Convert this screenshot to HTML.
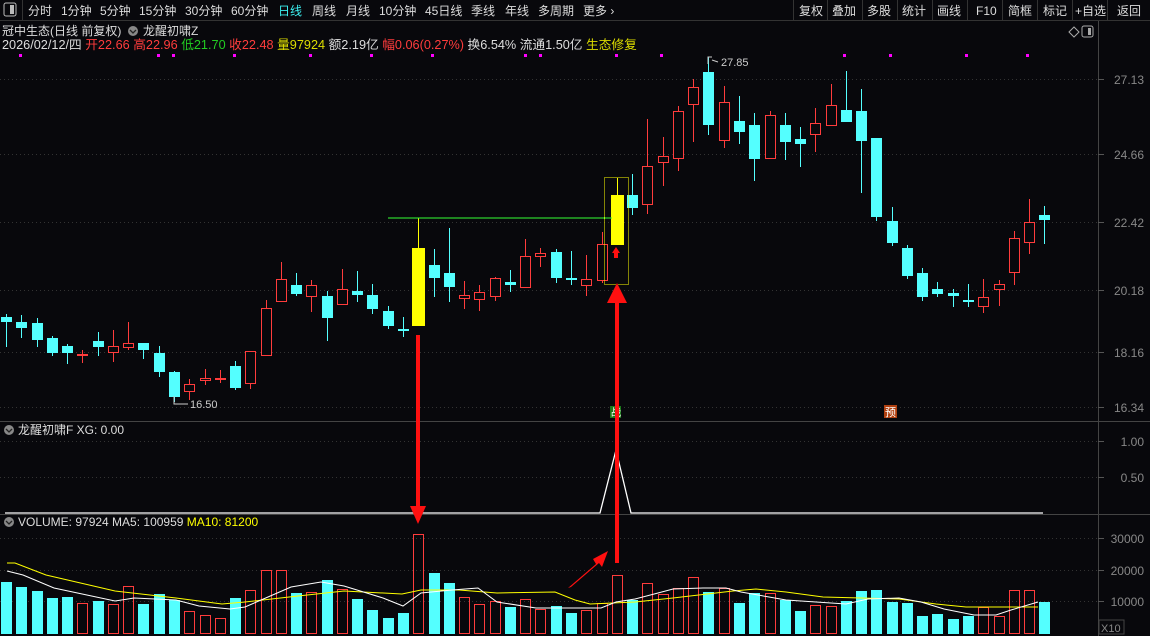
<!DOCTYPE html>
<html><head><meta charset="utf-8">
<style>
body{margin:0;background:#08080c;width:1150px;height:636px;overflow:hidden;font-family:"Liberation Sans","Noto Sans CJK SC",sans-serif}
svg{display:block}
text{font-family:"Liberation Sans","Noto Sans CJK SC",sans-serif}
</style></head><body>
<svg id="s" width="1150" height="636" xmlns="http://www.w3.org/2000/svg">
<rect width="1150" height="636" fill="#08080c"/>
<line x1="0" y1="20.5" x2="1150" y2="20.5" stroke="#333"/>
<rect x="4" y="3" width="12" height="13" rx="2" fill="none" stroke="#bbb"/>
<rect x="10" y="5" width="4" height="9" fill="#bbb"/>
<line x1="22.5" y1="0" x2="22.5" y2="20" stroke="#333"/>
<g font-size="12" fill="#ddd">
<text x="28" y="15">分时</text><text x="61" y="15">1分钟</text><text x="100" y="15">5分钟</text><text x="139" y="15">15分钟</text><text x="185" y="15">30分钟</text><text x="231" y="15">60分钟</text><text x="278" y="15" fill="#3cf0f0">日线</text><text x="312" y="15">周线</text><text x="346" y="15">月线</text><text x="379" y="15">10分钟</text><text x="425" y="15">45日线</text><text x="471" y="15">季线</text><text x="505" y="15">年线</text><text x="538" y="15">多周期</text><text x="583" y="15">更多 ›</text>
<text x="799" y="15">复权</text><text x="832" y="15">叠加</text><text x="867" y="15">多股</text><text x="902" y="15">统计</text><text x="937" y="15">画线</text><text x="976" y="15">F10</text><text x="1008" y="15">简框</text><text x="1043" y="15">标记</text><text x="1075" y="15">+自选</text><text x="1117" y="15">返回</text>
</g>
<g stroke="#333"><line x1="793.5" y1="0" x2="793.5" y2="20"/><line x1="827.5" y1="0" x2="827.5" y2="20"/><line x1="862.5" y1="0" x2="862.5" y2="20"/><line x1="897.5" y1="0" x2="897.5" y2="20"/><line x1="932.5" y1="0" x2="932.5" y2="20"/><line x1="967.5" y1="0" x2="967.5" y2="20"/><line x1="1002.5" y1="0" x2="1002.5" y2="20"/><line x1="1037.5" y1="0" x2="1037.5" y2="20"/><line x1="1072.5" y1="0" x2="1072.5" y2="20"/><line x1="1107.5" y1="0" x2="1107.5" y2="20"/></g>
<g font-size="12">
<text x="2" y="35" fill="#ddd">冠中生态(日线 前复权)</text>
<circle cx="133" cy="31" r="5" fill="#888"/><path d="M130 30l3 3 3-3" stroke="#222" fill="none" stroke-width="1.3"/>
<text x="143" y="35" fill="#ddd">龙醒初啸Z</text>
<text x="2" y="49" fill="#ddd" font-size="12.7">2026/02/12/四 <tspan fill="#ff3c3c">开22.66</tspan> <tspan fill="#ff3c3c">高22.96</tspan> <tspan fill="#22cc22">低21.70</tspan> <tspan fill="#ff3c3c">收22.48</tspan> <tspan fill="#dddd00">量97924</tspan> 额2.19亿 <tspan fill="#ff3c3c">幅0.06(0.27%)</tspan> 换6.54% 流通1.50亿 <tspan fill="#dddd00">生态修复</tspan></text>
</g>
<path d="M1069 32l5-5 5 5-5 5z" fill="none" stroke="#aaa"/>
<rect x="1082" y="26" width="11" height="11" rx="2" fill="none" stroke="#aaa"/><rect x="1088" y="28" width="3" height="7" fill="#aaa"/>
<line x1="1098.5" y1="21" x2="1098.5" y2="636" stroke="#444"/>
<line x1="0" y1="421.5" x2="1150" y2="421.5" stroke="#444"/>
<line x1="0" y1="514.5" x2="1150" y2="514.5" stroke="#444"/>
<g stroke="#333" stroke-dasharray="1,3">
<line x1="0" y1="79.5" x2="1098" y2="79.5"/><line x1="0" y1="154.5" x2="1098" y2="154.5"/><line x1="0" y1="222.5" x2="1098" y2="222.5"/><line x1="0" y1="290.5" x2="1098" y2="290.5"/><line x1="0" y1="352.5" x2="1098" y2="352.5"/><line x1="0" y1="407.5" x2="1098" y2="407.5"/>
<line x1="0" y1="441.5" x2="1098" y2="441.5"/><line x1="0" y1="477.5" x2="1098" y2="477.5"/>
<line x1="0" y1="538.5" x2="1098" y2="538.5"/><line x1="0" y1="570.5" x2="1098" y2="570.5"/><line x1="0" y1="601.5" x2="1098" y2="601.5"/>
</g>
<g stroke="#555"><line x1="1098" y1="79.5" x2="1104" y2="79.5"/><line x1="1098" y1="154.5" x2="1104" y2="154.5"/><line x1="1098" y1="222.5" x2="1104" y2="222.5"/><line x1="1098" y1="290.5" x2="1104" y2="290.5"/><line x1="1098" y1="352.5" x2="1104" y2="352.5"/><line x1="1098" y1="407.5" x2="1104" y2="407.5"/><line x1="1098" y1="441.5" x2="1104" y2="441.5"/><line x1="1098" y1="477.5" x2="1104" y2="477.5"/><line x1="1098" y1="538.5" x2="1104" y2="538.5"/><line x1="1098" y1="570.5" x2="1104" y2="570.5"/><line x1="1098" y1="601.5" x2="1104" y2="601.5"/></g>
<g font-size="12" fill="#888" text-anchor="end">
<text x="1144" y="84">27.13</text><text x="1144" y="159">24.66</text><text x="1144" y="227">22.42</text><text x="1144" y="295">20.18</text><text x="1144" y="357">18.16</text><text x="1144" y="412">16.34</text>
<text x="1144" y="446">1.00</text><text x="1144" y="482">0.50</text>
<text x="1144" y="543">30000</text><text x="1144" y="575">20000</text><text x="1144" y="606">10000</text>
</g>
<rect x="1099" y="620" width="25" height="14" fill="none" stroke="#444"/><text x="1101" y="632" font-size="11" fill="#888">X10</text>
<g font-size="12">
<circle cx="9" cy="430" r="5" fill="#888"/><path d="M6 429l3 3 3-3" stroke="#222" fill="none" stroke-width="1.3"/>
<text x="18" y="434" fill="#ddd">龙醒初啸F  XG: 0.00</text>
<circle cx="9" cy="522" r="5" fill="#888"/><path d="M6 521l3 3 3-3" stroke="#222" fill="none" stroke-width="1.3"/>
<text x="18" y="526" fill="#ddd">VOLUME: 97924  MA5: 100959  <tspan fill="#ffff00">MA10: 81200</tspan></text>
</g>
<g id="c"></g>
<line x1="388" y1="218" x2="612" y2="218" stroke="#33ff33"/>
<rect x="604.5" y="177.5" width="24" height="107" fill="none" stroke="#ffff00" stroke-dasharray="1,1"/>
<g font-size="11" fill="#ccc"><text x="190" y="408">16.50</text><path d="M174 396v8h14" stroke="#ccc" fill="none"/><text x="721" y="66">27.85</text><path d="M708 64v-7h4M712 60l6 2" stroke="#ccc" fill="none"/></g>
<rect x="610" y="406" width="11" height="12" fill="#1a7a1a"/><text x="611" y="416" font-size="10" fill="#fff">战</text>
<rect x="884" y="405" width="13" height="13" fill="#b04010"/><text x="885" y="416" font-size="11" fill="#fff">预</text>
<polyline points="5,513 600,513 616,450 631,513 1043,513" fill="none" stroke="#fff" stroke-width="1.3"/>
<g fill="#ff1010" stroke="none">
<rect x="416" y="335" width="4" height="175"/><path d="M410 506h16l-8 18z"/>
<rect x="615" y="300" width="4" height="263"/><path d="M607 303l10-20 10 20z"/>
<path d="M568 588l28-24-3-5 15-8-6 16-3-4-28 24z"/>
<path d="M612 253l4-6 4 6h-2v5h-4v-5z"/>
</g>
</svg>
<script>
var C=[
['c',317,322,314,347],['c',322,328,315,338],['c',323,340,318,347],['c',338,353,336,356],['c',346,353,344,364],['r',354,356,350,363],['c',341,347,332,356],['r',346,353,330,362],['r',343,348,322,350],['c',343,350,343,359],
['c',353,372,346,377],['c',372,397,371,402],['r',384,392,379,400],['r',378,381,369,385],['r',378,380,370,383],['c',366,388,361,390],['r',351,384,351,389],['r',308,356,300,356],['r',279,302,262,302],['c',285,294,273,296],
['r',285,297,280,312],['c',296,318,291,341],['r',289,305,269,305],['c',291,295,271,302],['c',295,309,284,314],['c',311,326,306,329],['c',329,331,317,337],['y',248,326,218,326],['c',265,278,249,297],['c',273,287,228,302],
['r',295,299,281,309],['r',292,300,285,311],['r',278,297,277,301],['c',282,285,270,292],['r',256,288,239,288],['r',253,257,248,267],['c',252,278,249,283],['c',278,280,251,285],['r',279,286,255,296],['r',244,281,232,283],
['y',195,245,178,245],['c',195,208,174,215],['r',166,205,119,214],['r',156,163,137,186],['r',111,159,106,171],['r',87,105,79,142],['c',72,125,57,135],['r',102,141,86,148],['c',121,132,96,144],['c',125,159,113,181],
['r',115,159,111,159],['c',125,142,113,160],['c',139,144,127,167],['r',123,135,108,152],['r',105,126,84,126],['c',110,122,71,122],['c',111,141,89,193],['c',138,217,138,221],['c',221,243,207,246],['c',248,276,245,279],
['c',273,297,268,301],['c',289,294,282,297],['c',293,296,289,307],['c',300,302,284,307],['r',297,307,279,313],['r',284,290,280,306],['r',238,273,231,285],['r',222,243,199,254],['c',215,220,206,244]];
var V=[['c',582],['c',587],['c',591],['c',598],['c',597],['r',603],['c',601],['r',604],['r',586],['c',604],['c',594],['c',600],['r',611],['r',615],['r',618],['c',598],['r',590],['r',570],['r',570],['c',593],['r',592],['c',580],['r',589],['c',599],['c',610],['c',618],['c',613],['r',534],['c',573],['c',583],['r',597],['r',604],['r',601],['c',607],['r',599],['r',609],['c',606],['c',613],['r',610],['r',603],['r',575],['c',600],['r',583],['r',594],['r',588],['r',577],['c',592],['r',588],['c',603],['c',593],['r',593],['c',600],['c',611],['r',605],['r',606],['c',601],['c',591],['c',590],['c',602],['c',603],['c',616],['c',614],['c',619],['c',616],['r',607],['r',616],['r',590],['r',590],['c',602]];
var s='',R='#ff3c3c',Cy='#54ffff';
for(var i=0;i<C.length;i++){var d=C[i],x=Math.round(6+i*15.27),col=d[0]=='c'?Cy:(d[0]=='y'?'#ffff00':R);
s+='<line x1="'+(x+.5)+'" y1="'+d[3]+'" x2="'+(x+.5)+'" y2="'+d[4]+'" stroke="'+col+'"/>';
var h=Math.max(d[2]-d[1],1);
if(d[0]=='r')s+='<rect x="'+(x-4.5)+'" y="'+(d[1]+.5)+'" width="10" height="'+(h<2?1:h-1)+'" fill="#08080c" stroke="'+R+'"/>';
else if(d[0]=='y')s+='<rect x="'+(x-6)+'" y="'+d[1]+'" width="13" height="'+h+'" fill="#ffff00"/>';
else s+='<rect x="'+(x-5)+'" y="'+d[1]+'" width="11" height="'+h+'" fill="'+Cy+'"/>';}
for(var i=0;i<V.length;i++){var x=Math.round(6+i*15.27),t=V[i][1];
if(V[i][0]=='c')s+='<rect x="'+(x-5)+'" y="'+t+'" width="11" height="'+(634-t)+'" fill="'+Cy+'"/>';
else s+='<rect x="'+(x-4.5)+'" y="'+(t+.5)+'" width="10" height="'+(633-t)+'" fill="none" stroke="'+R+'"/>';}
s+='<polyline fill="none" stroke="#ffff00" points="7,563 15,563 46,575 115,591 176,598 222,604 245,602 298,596 344,591 402,594 421,590 459,590 497,593 555,592 575,600 590,604 635,602 673,598 733,591 756,589 786,592 823,597 899,599 936,604 966,607 1038,607"/>';
s+='<polyline fill="none" stroke="#fff" points="7,571 23,575 54,588 115,601 134,598 176,600 199,606 230,609 245,607 268,597 291,587 321,582 344,586 383,598 403,606 421,593 452,590 478,588 497,602 536,608 601,608 616,602 635,599 658,593 673,589 703,588 726,588 741,592 786,600 846,604 868,599 899,598 921,602 944,609 974,615 996,615 1011,610 1038,602"/>';
[20,158,173,234,310,371,432,525,540,616,661,844,890,966,1027].forEach(function(x){s+='<rect x="'+(x-1)+'" y="54" width="3" height="3" fill="#ff00ff"/>';});
document.getElementById('c').innerHTML=s;
</script>
</body></html>
